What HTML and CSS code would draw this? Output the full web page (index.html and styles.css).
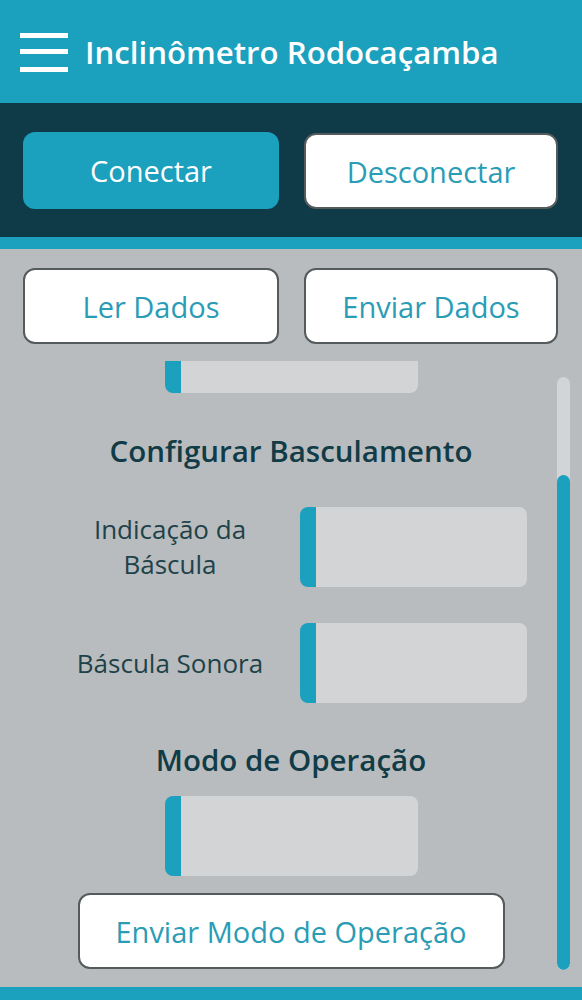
FILE: index.html
```html
<!DOCTYPE html>
<html lang="pt-BR">
<head>
<meta charset="utf-8">
<title>Inclinômetro Rodocaçamba</title>
<link rel="stylesheet" href="styles.css">
</head>
<body>
<div class="app">
  <header class="topbar">
    <svg class="menu-icon" width="48" height="40" viewBox="0 0 48 40" aria-hidden="true">
      <rect x="0" y="0" width="48" height="5" fill="#ffffff"/>
      <rect x="0" y="16" width="48" height="5" fill="#ffffff"/>
      <rect x="0" y="34" width="48" height="5" fill="#ffffff"/>
    </svg>
    <h1 class="app-title">Inclinômetro Rodocaçamba</h1>
  </header>

  <section class="connect-band">
    <button class="btn btn-primary">Conectar</button>
    <button class="btn btn-outline">Desconectar</button>
  </section>
  <div class="accent-strip"></div>

  <main class="content">
    <div class="action-row">
      <button class="btn btn-outline">Ler Dados</button>
      <button class="btn btn-outline">Enviar Dados</button>
    </div>

    <div class="scroll-area">
      <div class="scroll-inner">
        <div class="field field-partial"></div>

        <h2 class="section-title">Configurar Basculamento</h2>

        <div class="form-row">
          <label class="form-label">Indicação da<br>Báscula</label>
          <div class="field field-wide"></div>
        </div>
        <div class="form-row">
          <label class="form-label">Báscula Sonora</label>
          <div class="field field-wide"></div>
        </div>

        <h2 class="section-title section-title-2">Modo de Operação</h2>
        <div class="field field-mode"></div>
        <button class="btn btn-outline btn-send-mode">Enviar Modo de Operação</button>
      </div>
      <div class="scrollbar"><div class="scrollbar-thumb"></div></div>
    </div>
  </main>
  <div class="accent-strip accent-bottom"></div>
</div>
</body>
</html>
```

FILE: styles.css
```css
* { box-sizing: border-box; }

html, body {
  margin: 0;
  padding: 0;
}

body {
  font-family: "Open Sans", "Noto Sans", "Liberation Sans", sans-serif;
  background: #b9bcbe;
  width: 582px;
  height: 1000px;
  overflow: hidden;
}

.app {
  display: flex;
  flex-direction: column;
  height: 1000px;
}

.topbar {
  height: 103px;
  background: #1ba0be;
  display: flex;
  align-items: center;
  padding-left: 20px;
  gap: 17px;
  flex: none;
}

.menu-icon {
  display: block;
  margin-top: 2px;
}

.app-title {
  margin: 0;
  color: #ffffff;
  font-size: 31.2px;
  font-weight: 600;
  letter-spacing: 0;
  white-space: nowrap;
}

.connect-band {
  height: 134px;
  background: #0f3a47;
  display: grid;
  grid-template-columns: 256px 254px;
  column-gap: 25px;
  padding: 29px 0 0 23px;
  align-content: start;
  flex: none;
}

.accent-strip {
  height: 12px;
  background: #1ba0be;
  flex: none;
}

.btn {
  font-family: inherit;
  font-size: 29px;
  height: 77px;
  border-radius: 12px;
  cursor: pointer;
  padding: 0;
}

.btn-primary {
  background: #1ba0be;
  color: #ffffff;
  border: none;
}

.btn-outline {
  background: #ffffff;
  color: #2a9cb5;
  border: 2px solid #555a5c;
}

.connect-band .btn-outline {
  height: 76px;
  margin-top: 1px;
}

.content {
  flex: 1;
  display: flex;
  flex-direction: column;
  padding-top: 19px;
  min-height: 0;
}

.action-row {
  display: grid;
  grid-template-columns: 256px 254px;
  column-gap: 25px;
  padding-left: 23px;
}

.action-row .btn {
  height: 76px;
}

.scroll-area {
  position: relative;
  flex: 1;
  margin-top: 17px;
  overflow: hidden;
}

.scroll-inner {
  display: flex;
  flex-direction: column;
  align-items: center;
}

.field {
  background: #d3d4d6;
  border-left: 16px solid #1ba0be;
  border-radius: 8px;
  height: 80px;
}

.field-partial {
  width: 253px;
  height: 32px;
  border-radius: 0 0 8px 8px;
  margin-left: 1px;
}

.section-title {
  margin: 0;
  color: #113b46;
  font-size: 29.5px;
  font-weight: 600;
  line-height: 40px;
}

.field-partial + .section-title {
  margin-top: 38px;
}

.form-row {
  align-self: flex-start;
  display: grid;
  grid-template-columns: 260px 227px;
  align-items: center;
  margin-left: 40px;
  margin-top: 36px;
}

.form-label {
  text-align: center;
  color: #1e4249;
  font-size: 26px;
  line-height: 35px;
}

.field-wide {
  width: 227px;
}

.section-title-2 {
  margin-top: 37px;
}

.field-mode {
  width: 253px;
  margin-top: 16px;
  margin-left: 1px;
}

.btn-send-mode {
  width: 427px;
  height: 76px;
  margin-top: 17px;
}

.scrollbar {
  position: absolute;
  left: 557px;
  top: 16px;
  width: 13px;
  height: 593px;
  background: #d2d4d6;
  border-radius: 7px;
  overflow: hidden;
}

.scrollbar-thumb {
  position: absolute;
  left: 0;
  right: 0;
  bottom: 0;
  height: 495px;
  background: #1ba0be;
  border-radius: 7px;
}

.accent-bottom {
  height: 13px;
}
```
